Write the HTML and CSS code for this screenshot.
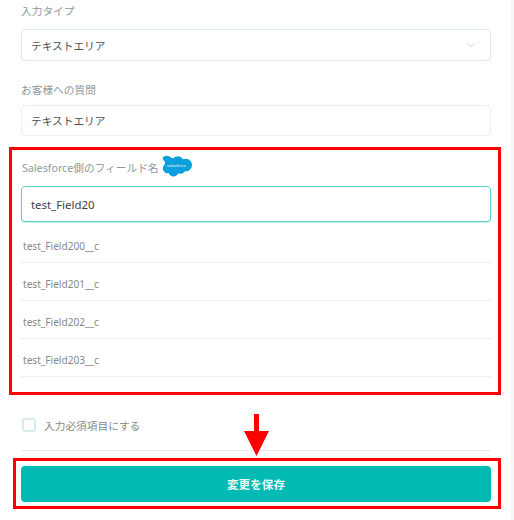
FILE: index.html
```html
<!DOCTYPE html>
<html lang="ja">
<head>
    <meta charset="UTF-8">
    <meta name="viewport" content="width=device-width, initial-scale=1.0">
    <title>フィールド設定</title>
    <link rel="stylesheet" href="styles.css">
</head>
<body>
    <div class="page">
        <form class="form">
            <label class="field-label label-type">入力タイプ</label>
            <div class="control select-box">
                <span>テキストエリア</span>
                <svg class="chevron" width="10" height="6" viewBox="0 0 10 6"><path d="M1 1l4 4 4-4" fill="none" stroke="#dfe6e6" stroke-width="1.2"/></svg>
            </div>
            <label class="field-label label-question">お客様への質問</label>
            <div class="control text-box">テキストエリア</div>

            <div class="sf-label">
                <label class="field-label">Salesforce側のフィールド名</label>
                <svg class="sf-logo" width="31" height="22" viewBox="0 0 31 22">
                    <path d="M12.5 3.2C13.6 2 15.100 1.300 16.800 1.300c2.200 0 4.100 1.200 5.100 3 .9-.4 1.800-.6 2.800-.6 3.500 0 6.300 2.900 6.300 6.400s-2.800 6.400-6.300 6.400c-.4 0-.9 0-1.300-.1-.8 1.400-2.300 2.400-4 2.400-.7 0-1.400-.2-2-.5-.8 1.900-2.700 3.200-4.800 3.200-2.200 0-4.200-1.400-4.900-3.400-.3.100-.7.100-1 .100-2.700 0-4.900-2.200-4.900-5 0-1.800 1-3.400 2.400-4.300-.3-.7-.5-1.500-.5-2.300C-.2 3.200 2.400.7 5.600.7c1.900 0 3.600.9 4.700 2.300z" fill="#0a9fdc"/>
                    <text class="sf-logo-text" x="15.500" y="12" text-anchor="middle">salesforce</text>
                </svg>
            </div>
            <div class="control focus-box">test_Field20</div>
            <ul class="options">
                <li>test_Field200__c</li>
                <li>test_Field201__c</li>
                <li>test_Field202__c</li>
                <li>test_Field203__c</li>
            </ul>

            <label class="required">
                <span class="checkbox"></span>
                <span>入力必須項目にする</span>
            </label>
            <div class="actions">
                <button type="button" class="save-button">変更を保存</button>
            </div>
        </form>

        <!-- annotations drawn over the screenshot -->
        <div class="mark mark-field"></div>
        <div class="mark mark-save"></div>
        <svg class="arrow" width="25" height="42" viewBox="0 0 25 42"><path d="M10 0h5v17h10L12.500 42 0 17h10z" fill="#f00"/></svg>
    </div>
</body>
</html>
```
FILE: styles.css
```css
* {
    box-sizing: border-box;
}

body {
    margin: 0;
    background-color: #fff;
    font-family: "Noto Sans", "Noto Sans CJK JP", sans-serif;
    overflow: hidden;
}

.page {
    position: relative;
    width: 514px;
    height: 520px;
    border-right: 3px solid #f7f7f7;
}

.form {
    display: flex;
    flex-direction: column;
    width: 470px;
    margin-left: 21px;
}

.field-label {
    display: block;
    font-size: 10.7px;
    line-height: 16px;
    color: #8b9aa1;
}

.label-type {
    margin-top: 3px;
    margin-bottom: 10px;
}

.label-question {
    margin-top: 21px;
    margin-bottom: 7px;
}

.control {
    display: flex;
    align-items: center;
    justify-content: space-between;
    padding: 0 9px;
    font-size: 10.7px;
    color: #4a4f52;
    background-color: #fff;
    border-radius: 4px;
}

.select-box {
    height: 32px;
    border: 1px solid #d9e9e8;
}

.chevron {
    margin-right: 5px;
}

.text-box {
    height: 31px;
    border: 1px solid #e6f1f1;
}

.sf-label {
    display: flex;
    align-items: flex-start;
    height: 50px;
    padding: 24px 0 0 1px;
}

.sf-logo {
    margin: -5px 0 0 2px;
}

.sf-logo-text {
    font-size: 4px;
    fill: #fff;
}

.focus-box {
    height: 36px;
    font-size: 11.4px;
    color: #3d4245;
    border: 1px solid #5fd0c8;
    box-shadow: 0 1px 0 #c8f0ee;
}

.options {
    list-style: none;
    margin: 2px 0 0;
    padding: 0;
}

.options li {
    height: 38px;
    padding: 11px 0 0 2px;
    font-size: 10.100px;
    line-height: 20px;
    color: #83898c;
    border-bottom: 1px solid #eef0f0;
}

.options li:first-child {
    height: 39px;
    padding-top: 12px;
}

.required {
    display: flex;
    align-items: center;
    gap: 8px;
    height: 16px;
    margin-top: 40px;
    padding-left: 1px;
    font-size: 10.7px;
    color: #7f8a90;
}

.checkbox {
    width: 14px;
    height: 14px;
    background-color: #fff;
    border: 2px solid #d5ecec;
    border-radius: 3px;
}

.actions {
    margin-top: 17px;
    padding-top: 15px;
    border-top: 1px solid #e8eaeb;
}

.save-button {
    display: block;
    width: 100%;
    height: 36px;
    font-family: inherit;
    font-size: 11.6px;
    font-weight: 700;
    color: #eefaf9;
    background-color: #00bab3;
    border: none;
    border-radius: 4px;
}

.mark {
    position: absolute;
    border: 3px solid #f00;
}

.mark-field {
    left: 9px;
    top: 147px;
    width: 492px;
    height: 248px;
}

.mark-save {
    left: 13px;
    top: 458px;
    width: 488px;
    height: 51px;
}

.arrow {
    position: absolute;
    left: 244px;
    top: 414px;
}
```
